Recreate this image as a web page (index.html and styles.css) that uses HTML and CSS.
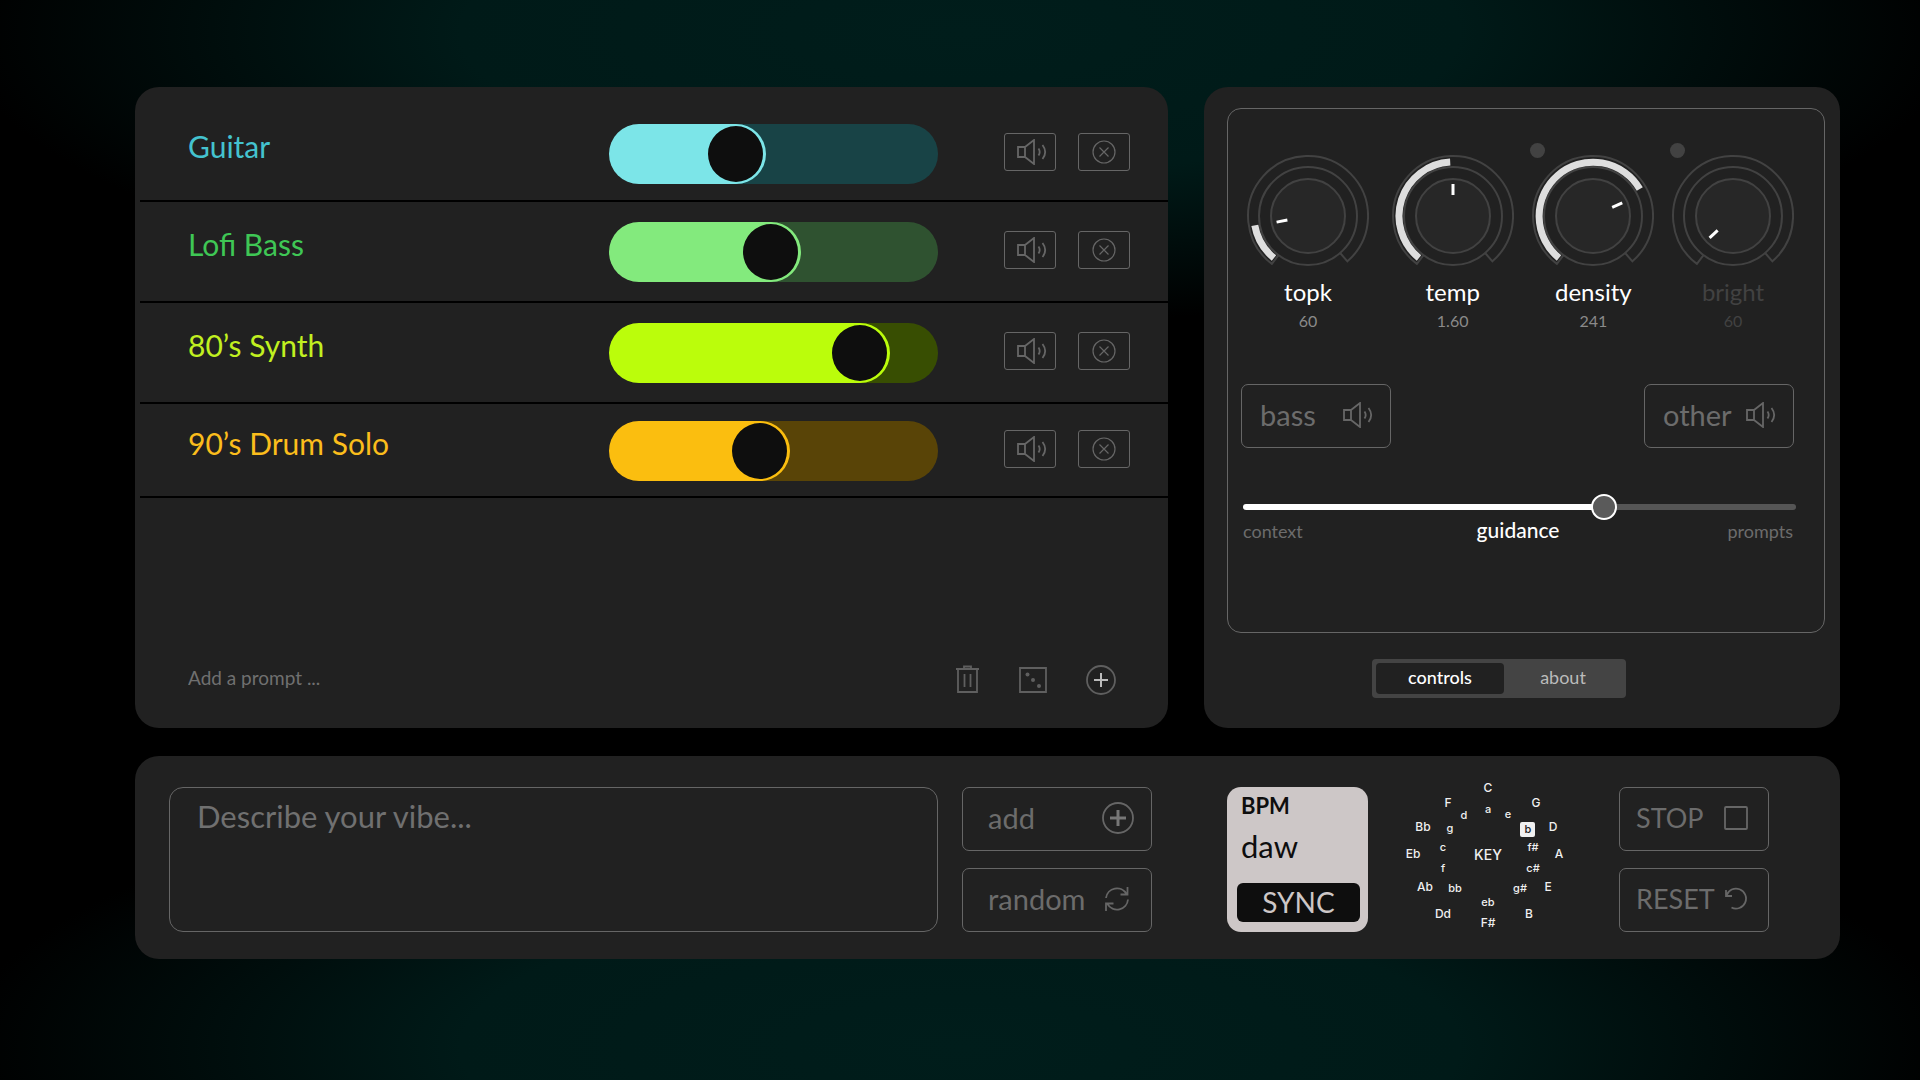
FILE: index.html
```html
<!DOCTYPE html>
<html lang="en">
<head>
  <meta charset="UTF-8">
  <title>Prompt Mixer</title>
  <meta name="viewport" content="width=device-width, initial-scale=1.0">
  <link rel="stylesheet" href="styles.css">
</head>
<body>

  <!-- Shared icons -->
  <svg class="sprite" aria-hidden="true">
    <symbol id="icon-speaker" viewBox="0 0 30 26">
      <path d="M1 8h7v10H1zM8 8l9-7v24l-9-7M21.500 9.500q2.400 3.500 0 7M25.500 6q5.400 7 0 14"/>
    </symbol>
    <symbol id="icon-remove" viewBox="0 0 24 24">
      <circle cx="12" cy="12" r="11"/>
      <path d="M7.500 7.500l9 9M16.500 7.500l-9 9"/>
    </symbol>
    <symbol id="knob-ring" viewBox="0 0 122 114">
      <circle class="knob-cap" cx="61" cy="61" r="37"/>
      <circle cx="61" cy="61" r="49"/>
      <path d="M31.500 100.100L24.900 108.900A60 60 0 1 1 100.400 106.300L93.100 98"/>
    </symbol>
  </svg>

  <main>

    <!-- Prompt list -->
    <section class="panel prompts">
      <div class="prompt guitar">
        <label for="guitar">Guitar</label>
        <input type="range" id="guitar" class="level" value="36" style="--value: 36">
        <div class="actions">
          <button aria-label="Mute Guitar"><svg class="icon speaker"><use href="#icon-speaker"/></svg></button>
          <button aria-label="Remove Guitar"><svg class="icon remove"><use href="#icon-remove"/></svg></button>
        </div>
      </div>
      <div class="prompt bass">
        <label for="lofi">Lofi Bass</label>
        <input type="range" id="lofi" class="level" value="49" style="--value: 49">
        <div class="actions">
          <button aria-label="Mute Lofi Bass"><svg class="icon speaker"><use href="#icon-speaker"/></svg></button>
          <button aria-label="Remove Lofi Bass"><svg class="icon remove"><use href="#icon-remove"/></svg></button>
        </div>
      </div>
      <div class="prompt synth">
        <label for="synth">80’s Synth</label>
        <input type="range" id="synth" class="level" value="82" style="--value: 82">
        <div class="actions">
          <button aria-label="Mute 80’s Synth"><svg class="icon speaker"><use href="#icon-speaker"/></svg></button>
          <button aria-label="Remove 80’s Synth"><svg class="icon remove"><use href="#icon-remove"/></svg></button>
        </div>
      </div>
      <div class="prompt drums">
        <label for="drums">90’s Drum Solo</label>
        <input type="range" id="drums" class="level" value="45" style="--value: 45">
        <div class="actions">
          <button aria-label="Mute 90’s Drum Solo"><svg class="icon speaker"><use href="#icon-speaker"/></svg></button>
          <button aria-label="Remove 90’s Drum Solo"><svg class="icon remove"><use href="#icon-remove"/></svg></button>
        </div>
      </div>

      <div class="new-prompt">
        <input type="text" aria-label="Add a prompt" placeholder="Add a prompt ...">
        <button aria-label="Delete all prompts">
          <svg class="icon" width="24" height="30" viewBox="0 0 24 30"><path d="M0 4h23M8 4V1.500h7V4M2 4v23h19V4M8.500 9v13M14.500 9v13"/></svg>
        </button>
        <button aria-label="Roll a prompt">
          <svg class="icon" width="28" height="28" viewBox="0 0 28 28"><path d="M1 2h26v24H1z"/><g class="dots"><circle cx="8.500" cy="8.500" r="2"/><circle cx="14" cy="14" r="2"/><circle cx="20" cy="20" r="2"/></g></svg>
        </button>
        <button aria-label="Add prompt">
          <svg class="icon" width="30" height="30" viewBox="0 0 30 30"><circle cx="15" cy="15" r="14"/><path class="plus" d="M15 8v14M8 15h14"/></svg>
        </button>
      </div>
    </section>

    <!-- Model controls -->
    <section class="panel settings">
      <div class="frame">
        <div class="knobs">
          <div class="knob">
            <svg width="122" height="114" viewBox="0 0 122 114" role="slider" aria-label="topk" aria-valuenow="60">
              <use href="#knob-ring"/>
              <path class="knob-value" d="M27 103A54 54 0 0 1 7.800 70.400"/>
              <path class="knob-mark" d="M61 29v11" transform="rotate(259 61 61)"/>
            </svg>
            <span class="knob-name">topk</span>
            <span class="knob-number">60</span>
          </div>
          <div class="knob">
            <svg width="122" height="114" viewBox="0 0 122 114" role="slider" aria-label="temp" aria-valuenow="1.60">
              <use href="#knob-ring"/>
              <path class="knob-value" d="M27 103A54 54 0 0 1 58.200 7.100"/>
              <path class="knob-mark" d="M61 29v11"/>
            </svg>
            <span class="knob-name">temp</span>
            <span class="knob-number">1.60</span>
          </div>
          <div class="knob">
            <button class="knob-auto" aria-label="Auto density"></button>
            <svg width="122" height="114" viewBox="0 0 122 114" role="slider" aria-label="density" aria-valuenow="241">
              <use href="#knob-ring"/>
              <path class="knob-value" d="M27 103A54 54 0 1 1 107.800 34"/>
              <path class="knob-mark" d="M61 29v11" transform="rotate(66 61 61)"/>
            </svg>
            <span class="knob-name">density</span>
            <span class="knob-number">241</span>
          </div>
          <div class="knob off">
            <button class="knob-auto" aria-label="Auto bright"></button>
            <svg width="122" height="114" viewBox="0 0 122 114" role="slider" aria-label="bright" aria-valuenow="60">
              <use href="#knob-ring"/>
              <path class="knob-mark" d="M61 29v11" transform="rotate(227 61 61)"/>
            </svg>
            <span class="knob-name">bright</span>
            <span class="knob-number">60</span>
          </div>
        </div>

        <div class="mutes">
          <button class="btn">bass <svg class="icon speaker"><use href="#icon-speaker"/></svg></button>
          <button class="btn">other <svg class="icon speaker"><use href="#icon-speaker"/></svg></button>
        </div>

        <div class="guidance">
          <input type="range" id="guidance" value="66" style="--value: 66">
          <div class="guidance-labels">
            <span>context</span>
            <label for="guidance">guidance</label>
            <span>prompts</span>
          </div>
        </div>
      </div>

      <div class="tabs">
        <button class="active">controls</button>
        <button>about</button>
      </div>
    </section>

    <!-- Transport bar -->
    <section class="panel transport">
      <textarea aria-label="Describe your vibe" placeholder="Describe your vibe..."></textarea>

      <div class="stack">
        <button class="btn wide">add
          <svg class="icon" width="32" height="32" viewBox="0 0 32 32"><circle cx="16" cy="16" r="15"/><path class="plus-bold" d="M16 8v16M8 16h16"/></svg>
        </button>
        <button class="btn wide">random
          <svg class="icon refresh" width="24" height="24" viewBox="0 0 24 24"><path d="M1 11A11 11 0 0 1 21.500 7M22.500 0v7.500H15.500M23 12.500A11 11 0 0 1 2.500 17M1 24v-7.500h7.500"/></svg>
        </button>
      </div>

      <div class="bpm">
        <strong>BPM</strong>
        <span>daw</span>
        <button>SYNC</button>
      </div>

      <!-- Circle of fifths: majors outside, minors inside -->
      <svg class="key" width="160" height="150" viewBox="0 0 160 150">
        <rect x="115" y="42" width="15" height="15" rx="2"/>
        <text x="83" y="12">C</text>
        <text x="131" y="27">G</text>
        <text x="148" y="51">D</text>
        <text x="154" y="78">A</text>
        <text x="143" y="111">E</text>
        <text x="124" y="138">B</text>
        <text x="83" y="147">F#</text>
        <text x="38" y="138">Dd</text>
        <text x="20" y="111">Ab</text>
        <text x="8" y="78">Eb</text>
        <text x="18" y="51">Bb</text>
        <text x="43" y="27">F</text>
        <g class="minor">
          <text x="83" y="33">a</text>
          <text x="103" y="38">e</text>
          <text x="123" y="53" class="picked">b</text>
          <text x="128" y="71">f#</text>
          <text x="128" y="92">c#</text>
          <text x="115" y="112">g#</text>
          <text x="83" y="126">eb</text>
          <text x="50" y="112">bb</text>
          <text x="38" y="92">f</text>
          <text x="38" y="71">c</text>
          <text x="45" y="52">g</text>
          <text x="59" y="39">d</text>
        </g>
        <text x="83" y="80" class="title">KEY</text>
      </svg>

      <div class="stack">
        <button class="btn caps">STOP
          <svg class="icon" width="24" height="24" viewBox="0 0 24 24"><rect x="1" y="1" width="22" height="22" rx="1"/></svg>
        </button>
        <button class="btn caps">RESET
          <svg class="icon" width="24" height="24" viewBox="0 0 24 24"><path d="M2 3v6h6M2.500 8.500A10 10 0 1 1 7.500 20.500"/></svg>
        </button>
      </div>
    </section>

  </main>

</body>
</html>
```
FILE: styles.css
```css
* {
  box-sizing: border-box;
}

body {
  margin: 0;
  min-height: 100vh;
  font-family: Lato, "Open Sans", sans-serif;
  color: #fff;
  background:
    radial-gradient(ellipse 52% 27% at 50% 3%, #001d1b 0%, #001a18 50%, transparent 100%),
    radial-gradient(ellipse 52% 27% at 50% 97%, #001d1b 0%, #001a18 50%, transparent 100%),
    #000;
}

main {
  display: grid;
  grid-template-columns: 1033fr 636fr;
  gap: 28px 36px;
  padding: 87px 80px 87px 135px;
}

button, input, textarea {
  margin: 0;
  padding: 0;
  border: 0;
  background: none;
  color: inherit;
  font: inherit;
}

button {
  cursor: pointer;
}

.sprite {
  position: absolute;
  width: 0;
  height: 0;
}

.panel {
  background: #212121;
  border-radius: 24px;
}

.icon {
  display: block;
  flex: none;
  fill: none;
  stroke: #666;
  stroke-width: 1.8;
}

.speaker {
  width: 30px;
  height: 26px;
}

.remove {
  width: 24px;
  height: 24px;
  stroke-width: 1.2;
}

/* Prompt list */
.prompts {
  display: flex;
  flex-direction: column;
  padding-left: 5px;
}

.prompt {
  display: grid;
  grid-template-columns: 421fr 329fr 192fr;
  align-items: center;
  padding: 20px 38px 19px 48px;
  border-bottom: 2px solid #000;
}

.prompt:first-child {
  padding-top: 37px;
  padding-bottom: 16px;
}

.prompt:nth-child(4) {
  padding-top: 17px;
  padding-bottom: 15px;
}

.prompt label {
  padding-bottom: 16px;
  font-size: 30px;
  line-height: 36px;
  color: var(--text);
}

.guitar { --text: #44c3cf; --fill: #7ce5e8; --track: #184346; }
.bass { --text: #3fc755; --fill: #83ea7d; --track: #2f5230; }
.synth { --text: #c1f020; --fill: #bbfd0b; --track: #384e02; }
.drums { --text: #fbbd1c; --fill: #fbbe0f; --track: #594407; }

.level {
  appearance: none;
  width: 100%;
  height: 60px;
  border-radius: 30px;
  background: linear-gradient(to right, var(--fill) calc(30px + (100% - 60px) * var(--value) / 100), var(--track) 0);
}

.level::-webkit-slider-thumb {
  appearance: none;
  width: 60px;
  height: 60px;
  border: 2px solid var(--fill);
  border-right-width: 3px;
  border-radius: 50%;
  background: #0e0e0e;
}

.actions {
  display: flex;
  justify-content: flex-end;
  gap: 22px;
  padding-bottom: 4px;
}

.actions button {
  display: flex;
  align-items: center;
  justify-content: center;
  width: 52px;
  height: 38px;
  border: 1px solid #666;
  border-radius: 3px;
}

.actions .speaker {
  margin-left: 3px;
}

.new-prompt {
  display: flex;
  align-items: center;
  gap: 39px;
  margin-top: auto;
  padding: 0 52px 33px 48px;
}

.new-prompt input {
  flex: 1;
  height: 30px;
  padding-bottom: 6px;
  font-size: 19px;
}

.new-prompt .icon {
  stroke: #5f5f5f;
}

.icon .dots {
  fill: #5f5f5f;
  stroke: none;
}

.icon .plus {
  stroke: #bbb;
  stroke-width: 2;
}

.icon .plus-bold {
  stroke: #777;
  stroke-width: 3;
}

::placeholder {
  color: #707070;
  opacity: 1;
}

/* Model controls */
.settings {
  padding: 21px 15px 30px 23px;
}

.frame {
  height: 525px;
  padding: 46px 30px 0 13px;
  border: 1px solid #666;
  border-radius: 14px;
}

.knobs {
  display: grid;
  grid-template-columns: 145fr 141fr 140fr 122fr;
  padding-left: 6px;
}

.knob {
  position: relative;
  display: flex;
  flex-direction: column;
  align-items: center;
  width: 122px;
}

.knob svg {
  fill: none;
  stroke: #424242;
  stroke-width: 2;
}

.knob-cap {
  fill: #272727;
}

.knob-value {
  stroke: #dedede;
  stroke-width: 7;
}

.knob-mark {
  stroke: #fff;
  stroke-width: 3;
}

.knob-name {
  margin-top: 8px;
  font-size: 24px;
  line-height: 30px;
}

.knob-number {
  font-size: 16px;
  line-height: 28px;
  color: #8a8a8a;
}

.off .knob-name,
.off .knob-number {
  color: #424242;
}

.knob-auto {
  position: absolute;
  top: -12px;
  left: -2px;
  width: 15px;
  height: 15px;
  border-radius: 50%;
  background: #424242;
}

.mutes {
  display: flex;
  justify-content: space-between;
  margin-top: 49px;
}

.btn {
  display: flex;
  align-items: center;
  justify-content: space-between;
  width: 150px;
  height: 64px;
  padding: 0 17px 3px 18px;
  border: 1px solid #666;
  border-radius: 7px;
  color: #6c6c6c;
  font-size: 29px;
  line-height: 32px;
}

.btn.wide {
  width: 190px;
  padding-left: 25px;
}

.btn.caps {
  padding-left: 16px;
  padding-right: 20px;
  font-size: 27px;
}

.refresh {
  margin-right: 5px;
}

.guidance {
  margin: 46px -2px 0 2px;
}

.guidance input {
  display: block;
  appearance: none;
  width: 100%;
  height: 26px;
}

.guidance input::-webkit-slider-runnable-track {
  height: 6px;
  border-radius: 3px;
  background: linear-gradient(to right, #fff calc(13px + (100% - 26px) * var(--value) / 100), #555 0);
}

.guidance input::-webkit-slider-thumb {
  appearance: none;
  width: 26px;
  height: 26px;
  margin-top: -10px;
  border: 2px solid #fff;
  border-radius: 50%;
  background: #5a5a5a;
}

.guidance-labels {
  display: grid;
  grid-template-columns: 1fr auto 1fr;
  align-items: baseline;
  padding-right: 3px;
  font-size: 18px;
  line-height: 20px;
  color: #6c6c6c;
}

.guidance-labels label {
  color: #fff;
  font-size: 21px;
  font-weight: 500;
}

.guidance-labels span:last-child {
  text-align: right;
}

.tabs {
  display: grid;
  grid-template-columns: 128fr 118fr;
  width: 254px;
  height: 39px;
  margin: 26px auto 0 145px;
  padding: 4px;
  border-radius: 4px;
  background: #444;
}

.tabs button {
  padding-bottom: 3px;
  border-radius: 4px;
  color: #bbb;
  font-size: 18px;
}

.tabs .active {
  background: #212121;
  color: #fff;
  font-weight: 500;
}

/* Transport bar */
.transport {
  grid-column: 1 / -1;
  display: flex;
  align-items: flex-start;
  padding: 31px 71px 27px 34px;
}

textarea {
  flex: 1;
  height: 145px;
  margin-right: 24px;
  padding: 10px 27px;
  border: 1px solid #666;
  border-radius: 14px;
  font-size: 31px;
  line-height: 36px;
  resize: none;
}

.stack {
  display: flex;
  flex-direction: column;
  gap: 17px;
}

.bpm {
  display: flex;
  flex-direction: column;
  width: 141px;
  height: 145px;
  margin: 0 37px 0 75px;
  padding: 7px 8px 10px 10px;
  border-radius: 14px;
  background: #cdc7c7;
  color: #0e0e0e;
}

.bpm strong {
  padding-left: 4px;
  font-size: 22px;
  line-height: 24px;
}

.bpm span {
  padding-left: 4px;
  font-size: 31px;
  line-height: 56px;
}

.bpm button {
  height: 39px;
  margin-top: auto;
  padding-bottom: 2px;
  border-radius: 6px;
  background: #0e0e0e;
  color: #cdc7c7;
  font-size: 28px;
  line-height: 36px;
}

.key {
  margin: -7px 54px 0 0;
  fill: #f0f0f0;
  font-family: Inter, sans-serif;
  font-size: 12px;
  font-weight: 500;
  text-anchor: middle;
}

.key .minor {
  font-size: 11px;
}

.key .picked {
  fill: #212121;
}

.key .title {
  font-size: 14px;
}
```
